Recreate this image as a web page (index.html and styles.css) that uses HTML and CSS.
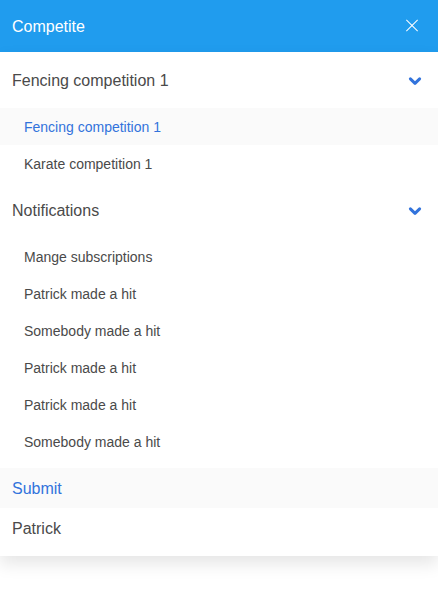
FILE: index.html
```html
<!DOCTYPE html>
<html lang="en">
<head>
<meta charset="utf-8">
<meta name="viewport" content="width=device-width, initial-scale=1">
<title>Competite</title>
<link rel="stylesheet" href="styles.css">
</head>
<body>
<header class="navbar">
  <a class="brand" href="#">Competite</a>
  <button class="close" type="button" aria-label="Close menu">
    <svg viewBox="0 0 52 52" width="52" height="52" aria-hidden="true">
      <rect x="18" y="25" width="16" height="1" transform="rotate(45 26 25.5)"/>
      <rect x="18" y="25" width="16" height="1" transform="rotate(-45 26 25.5)"/>
    </svg>
  </button>
</header>
<nav class="menu">
  <a class="item" href="#">Fencing competition 1
    <svg class="chevron" viewBox="0 0 14 10" width="14" height="10" aria-hidden="true"><path d="M2.400 2.900L7 7.300l4.600-4.400"/></svg>
  </a>
  <div class="dropdown">
    <a class="subitem active" href="#">Fencing competition 1</a>
    <a class="subitem" href="#">Karate competition 1</a>
  </div>
  <a class="item" href="#">Notifications
    <svg class="chevron" viewBox="0 0 14 10" width="14" height="10" aria-hidden="true"><path d="M2.400 2.900L7 7.300l4.600-4.400"/></svg>
  </a>
  <div class="dropdown">
    <a class="subitem" href="#">Mange subscriptions</a>
    <a class="subitem" href="#">Patrick made a hit</a>
    <a class="subitem" href="#">Somebody made a hit</a>
    <a class="subitem" href="#">Patrick made a hit</a>
    <a class="subitem" href="#">Patrick made a hit</a>
    <a class="subitem" href="#">Somebody made a hit</a>
  </div>
  <a class="item active" href="#">Submit</a>
  <a class="item" href="#">Patrick</a>
</nav>
</body>
</html>
```
FILE: styles.css
```css
* {
  box-sizing: border-box;
}

html {
  background: #fff;
}

body {
  min-height: 100vh;
  margin: 0;
  color: #4a4a4a;
  font-family: "Liberation Sans", Arial, sans-serif;
  font-size: 16px;
  line-height: 24px;
}

a {
  color: inherit;
  text-decoration: none;
}

.navbar {
  display: flex;
  align-items: center;
  justify-content: space-between;
  min-height: 52px;
  background: #209cee;
  color: #fff;
}

.brand {
  padding: 9px 12px 7px;
}

.close {
  width: 52px;
  height: 52px;
  padding: 0;
  border: 0;
  background: none;
  color: inherit;
}

.close svg {
  display: block;
  fill: currentColor;
}

.menu {
  padding: 8px 0;
  background: #fff;
  box-shadow: 0 8px 16px rgba(10, 10, 10, 0.1);
}

.item {
  display: flex;
  align-items: center;
  justify-content: space-between;
  padding: 9px 12px 7px;
}

.dropdown {
  padding: 8px 0;
}

.subitem {
  display: block;
  padding: 9px 24px 7px;
  font-size: 14px;
  line-height: 21px;
}

.active {
  background: #fafafa;
  color: #3273dc;
}

.chevron {
  margin-right: 4px;
}

.chevron path {
  fill: none;
  stroke: #3273dc;
  stroke-width: 3;
  stroke-linecap: round;
  stroke-linejoin: round;
}
```
